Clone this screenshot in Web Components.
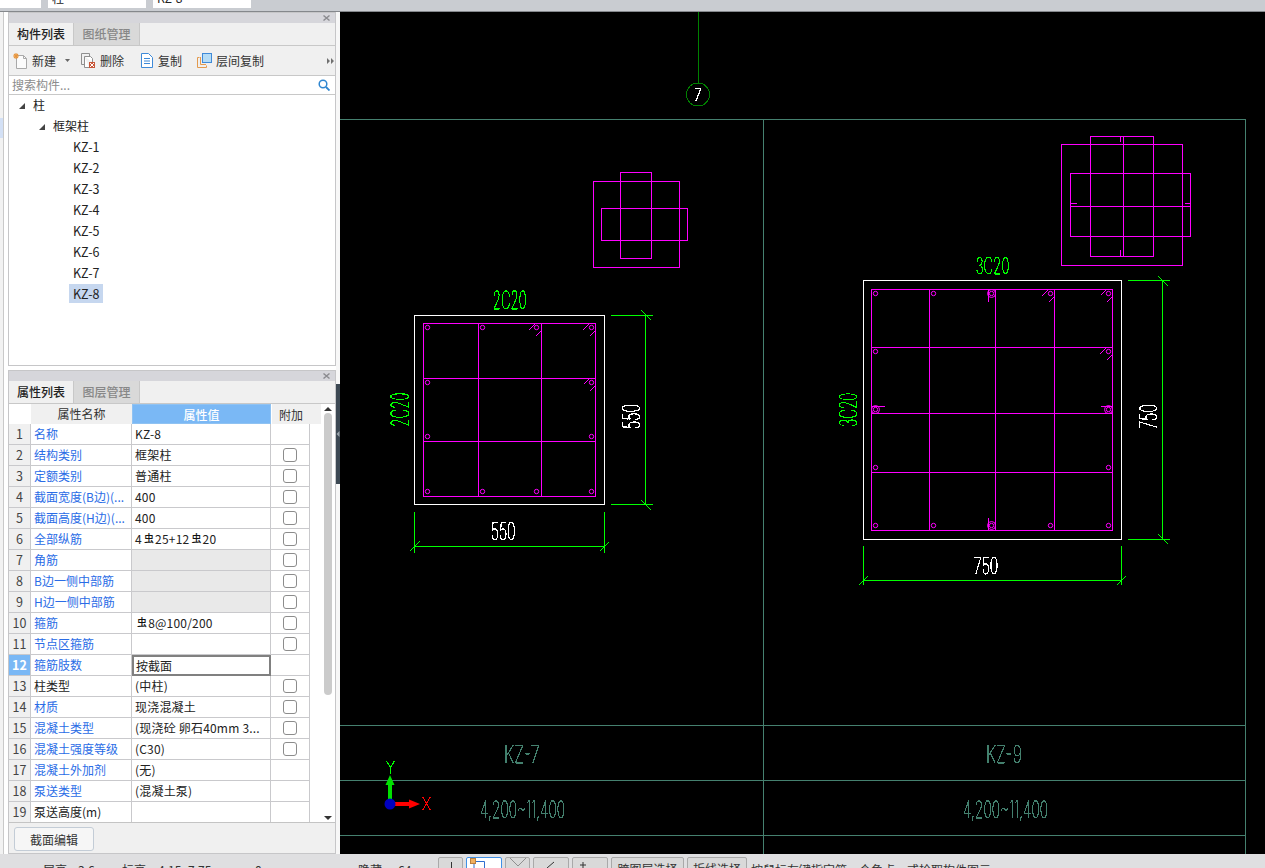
<!DOCTYPE html>
<html lang="zh">
<head>
<meta charset="utf-8">
<title>构件列表</title>
<style>
html, body { margin: 0; height: 100%; }
body {
  width: 1265px;
  height: 868px;
  overflow: hidden;
  display: flex;
  flex-direction: column;
  font: 12px "Noto Sans CJK SC", "Noto Sans", sans-serif;
  color: #222;
}
</style>
</head>
<body>
<gcl-topbar></gcl-topbar>
<gcl-workspace>
  <dock-panel slot="dock" tabs="构件列表,图纸管理" style="flex: 0 0 354px">
    <part-toolbar></part-toolbar>
    <part-search></part-search>
    <part-tree></part-tree>
  </dock-panel>
  <dock-panel slot="dock" tabs="属性列表,图层管理" style="flex: 1 1 auto">
    <prop-grid></prop-grid>
  </dock-panel>
  <cad-canvas slot="canvas"></cad-canvas>
</gcl-workspace>
<gcl-statusbar></gcl-statusbar>

<script>
/**
 * Small helper, every element has its markup set in an open shadow root
 *
 * @param {HTMLElement} el
 * @param {string} html
 */
function shadow (el, html) {
  el.attachShadow({ mode: 'open' }).innerHTML = html
}

class GclTopbar extends HTMLElement {
  connectedCallback () {
    shadow(this, `
<style>
:host { display: flex; flex: 0 0 12px; height: 12px; box-sizing: border-box; overflow: hidden;
  background: #c9ccd1; border-bottom: 1px solid #85888c; gap: 7px; align-items: flex-end; padding-bottom: 3px; }
div { height: 20px; background: #fff; flex: 0 0 98px; box-sizing: border-box; padding: 0 4px; line-height: 20px; }
div:first-of-type { flex-basis: 41px; }
</style>
<div></div><div>柱</div><div>KZ-8</div>`)
  }
}

class GclWorkspace extends HTMLElement {
  connectedCallback () {
    shadow(this, `
<style>
:host { display: grid; grid-template-columns: 8px 328px 4px 925px; flex: 1 1 auto; min-height: 0; background: #fff; }
.rail { border-right: 0; position: relative; background: linear-gradient(90deg, #f2f2f2 3px, #c9c9c9 3px, #c9c9c9 4px, #fff 4px); display: flex; flex-direction: column; }
.rail i { display: block; width: 3px; height: 20px; margin-top: 106px; background: #d3e0f5; }
.dock { display: flex; flex-direction: column; gap: 4px; min-height: 0; }
.split { background: #f7f7f7; padding-top: 372px; }
.split div { height: 100px; background: #3c4853; display: flex; align-items: center; }
.split svg { display: block; }
</style>
<div class="rail"><i></i></div>
<div class="dock"><slot name="dock"></slot></div>
<div class="split"><div><svg width="4" height="8" viewBox="0 0 4 8"><path d="M3.5 1 L0.5 4 L3.5 7 Z" fill="#9aa3ab"/></svg></div></div>
<slot name="canvas"></slot>`)
  }
}

class DockPanel extends HTMLElement {
  connectedCallback () {
    const tabs = this.getAttribute('tabs').split(',')
    shadow(this, `
<style>
:host { display: flex; flex-direction: column; box-sizing: border-box; border: 1px solid #c6c6c8; min-height: 0; background: #f0f0f0; }
.title { flex: 0 0 10px; height: 10px; background: #d6d6db; display: flex; justify-content: flex-end; align-items: center; padding-right: 5px; }
.tabs { flex: 0 0 23px; box-sizing: border-box; height: 23px; display: flex; border-bottom: 1px solid #c8c8c8; background: #f0f0f0; }
.tab { box-sizing: border-box; width: 65px; line-height: 21px; text-align: center; font-weight: 500; color: #222; border-right: 1px solid #c8c8c8; }
.tab + .tab { width: 66px; background: #d9d9d9; color: #878787; }
.body { flex: 1 1 auto; display: flex; flex-direction: column; min-height: 0; }
</style>
<div class="title"><svg width="7" height="6" viewBox="0 0 7 6"><path d="M0.5 0.5 L6.5 5.5 M6.5 0.5 L0.5 5.5" stroke="#8b8b8f" stroke-width="1.4"/></svg></div>
<div class="tabs">${tabs.map(t => `<div class="tab">${t}</div>`).join('')}</div>
<div class="body"><slot></slot></div>`)
  }
}

class PartToolbar extends HTMLElement {
  connectedCallback () {
    shadow(this, `
<style>
:host { display: flex; flex: 0 0 30px; box-sizing: border-box; height: 30px; border-bottom: 1px solid #c8c8c8; align-items: center; padding-left: 4px; background: #f0f0f0; color: #333; }
.btn { display: flex; align-items: center; gap: 4px; }
svg { display: block; flex: none; }
.more { margin-left: auto; margin-right: 1px; }
</style>
<div class="btn" style="width:68px">
  <svg width="15" height="16" viewBox="0 0 15 16"><path d="M3.5 2.5 H10.5 L13.5 5.5 V15.5 H3.5 Z" fill="#fbfbfb" stroke="#a9a9a9"/><path d="M10.5 2.5 V5.5 H13.5" fill="none" stroke="#a9a9a9"/><path d="M0 3 H6 M3 0 V6 M1 1 L5 5 M5 1 L1 5" stroke="#e8953c" stroke-width="1.1"/></svg>
  <span>新建</span>
  <svg style="margin-left:5px" width="5" height="3" viewBox="0 0 5 3"><path d="M0 0 H5 L2.5 3 Z" fill="#666"/></svg>
</div>
<div class="btn" style="width:59px">
  <svg width="15" height="16" viewBox="0 0 15 16"><path d="M0.5 0.5 H8.5 V3 M0.5 0.5 V11.5 H3" fill="none" stroke="#8f8f8f"/><path d="M3.5 3.5 H9.5 L11.5 5.5 V9 M3.5 3.5 V14.5 H8" fill="#fff" stroke="#8f8f8f"/><rect x="8" y="9" width="6" height="6" fill="#c9573a"/><path d="M9 10 L13 14 M13 10 L9 14" stroke="#fff"/></svg>
  <span>删除</span>
</div>
<div class="btn" style="width:57px">
  <svg width="14" height="15" viewBox="0 0 14 15"><path d="M1.5 0.5 H8.5 L12.5 4.5 V14.5 H1.5 Z" fill="#fff" stroke="#3f8ad8"/><path d="M4 5.5 H10 M4 8 H10 M4 10.5 H10" stroke="#3f8ad8"/></svg>
  <span>复制</span>
</div>
<div class="btn">
  <svg width="15" height="15" viewBox="0 0 15 15"><path d="M2.5 4.5 H0.5 V14.5 H9.5 V12.5" fill="none" stroke="#e39a4e"/><path d="M3.5 4 V11.5 H9" fill="none" stroke="#e39a4e"/><rect x="5.5" y="0.5" width="9" height="9" fill="#b5dcf6" stroke="#3f8ad8"/></svg>
  <span>层间复制</span>
</div>
<svg class="more" width="7" height="6" viewBox="0 0 7 6"><path d="M0 0 L3 3 L0 6 Z M4 0 L7 3 L4 6 Z" fill="#707070"/></svg>`)
  }
}

class PartSearch extends HTMLElement {
  connectedCallback () {
    shadow(this, `
<style>
:host { display: flex; flex: 0 0 19px; box-sizing: border-box; height: 19px; border-bottom: 1px solid #c8c8c8; background: #fff; align-items: center; justify-content: space-between; padding: 0 5px 0 3px; color: #8c8c8c; line-height: 18px; }
svg { display: block; }
</style>
<span>搜索构件...</span>
<svg width="12" height="12" viewBox="0 0 12 12"><circle cx="5" cy="5" r="3.8" fill="none" stroke="#2f86d0" stroke-width="1.5"/><path d="M8 8 L11.5 11.5" stroke="#2f86d0" stroke-width="1.8"/></svg>`)
  }
}

class PartTree extends HTMLElement {
  connectedCallback () {
    const arrow = '<svg width="6" height="6" viewBox="0 0 6 6"><path d="M6 0 V6 H0 Z" fill="#444"/></svg>'
    const kids = ['KZ-1', 'KZ-2', 'KZ-3', 'KZ-4', 'KZ-5', 'KZ-6', 'KZ-7', 'KZ-8']
    shadow(this, `
<style>
:host { display: block; flex: 1 1 auto; background: #fff; min-height: 0; overflow: hidden; font-size: 12px; color: #222; }
.row { display: flex; align-items: center; height: 21px; }
.row svg { margin-right: 8px; flex: none; }
.row span { position: relative; top: -1px; }
.l0 { padding-left: 10px; }
.l1 { padding-left: 30px; }
.l2 { padding-left: 60px; }
.l2 span { padding: 0 4px; line-height: 19px; font-size: 12.5px; }
.sel span { background: #c6d7ef; }
</style>
<div class="row l0">${arrow}<span>柱</span></div>
<div class="row l1">${arrow}<span>框架柱</span></div>
${kids.map(k => `<div class="row l2${k === 'KZ-8' ? ' sel' : ''}"><span>${k}</span></div>`).join('')}`)
  }
}

class PropGrid extends HTMLElement {
  connectedCallback () {
    const bar = '<b>虫</b>'
    // name, value, has checkbox, blue name, greyed value
    const rows = [
      ['名称', 'KZ-8', 0, 1],
      ['结构类别', '框架柱', 1, 1],
      ['定额类别', '普通柱', 1, 1],
      ['截面宽度(B边)(...', '400', 1, 1],
      ['截面高度(H边)(...', '400', 1, 1],
      ['全部纵筋', `4${bar}25+12${bar}20`, 1, 1],
      ['角筋', '', 1, 1, 1],
      ['B边一侧中部筋', '', 1, 1, 1],
      ['H边一侧中部筋', '', 1, 1, 1],
      ['箍筋', `${bar}8@100/200`, 1, 1],
      ['节点区箍筋', '', 1, 1],
      ['箍筋肢数', '按截面', 0, 1],
      ['柱类型', '(中柱)', 1, 0],
      ['材质', '现浇混凝土', 1, 1],
      ['混凝土类型', '(现浇砼 卵石40mm 3...', 1, 1],
      ['混凝土强度等级', '(C30)', 1, 1],
      ['混凝土外加剂', '(无)', 0, 1],
      ['泵送类型', '(混凝土泵)', 0, 1],
      ['泵送高度(m)', '', 0, 0]
    ]
    const cells = rows.map((r, i) => {
      const active = i === 11
      return `<div class="c no${active ? ' on' : ''}">${i + 1}</div>` +
        `<div class="c name${r[3] ? ' link' : ''}">${r[0]}</div>` +
        `<div class="c val${r[4] ? ' off' : ''}${active ? ' edit' : ''}">${r[1]}</div>` +
        `<div class="c add">${r[2] ? '<i></i>' : ''}</div><div class="pad"></div>`
    }).join('')
    shadow(this, `
<style>
:host { display: flex; flex-direction: column; flex: 1 1 auto; min-height: 0; white-space: nowrap; }
.wrap { display: flex; flex: 0 0 419px; background: #fff; }
.grid { display: grid; grid-template-columns: 22px 101px 139px 39px 11px; grid-auto-rows: 21px; grid-template-rows: 20px; flex: 0 0 312px; }
.h { background: #f0f0f0; text-align: center; line-height: 19px; color: #333; }
.h.blank { background: #fff; }
.h.cur { background: #7ab8f5; color: #fff; font-weight: 500; border: 1px solid #8fc2f2; box-sizing: border-box; }
.h.add { border-left: 1px solid #fff; }
.c { box-sizing: border-box; border-right: 1px solid #c9c9cc; border-bottom: 1px solid #c9c9cc; line-height: 20px; overflow: hidden; background: #fff; }
.no { background: #f0f0f0; text-align: center; color: #444; font-size: 12.5px; }
.no.on { background: #7ab8f5; color: #fff; font-weight: 700; }
.name { padding-left: 3px; }
.link { color: #2a6ce6; }
.val { padding-left: 3px; color: #222; letter-spacing: 0.2px; }
.off { background: #e9e9e9; }
.edit { border: 2px solid #808080; line-height: 18px; padding-left: 2px; background: #fff; letter-spacing: 0; }
.add { display: flex; align-items: center; justify-content: center; }
.add i { display: block; box-sizing: border-box; width: 14px; height: 14px; border: 1px solid #8c8c8c; border-radius: 3px; background: #fff; }
b { font-weight: 500; font-size: 10px; position: relative; top: -2px; margin: 0 1px 0 2px; color: #111; }
.bar { flex: 1 1 auto; display: flex; flex-direction: column; align-items: center; background: #fff; padding-right: 1px; }
.bar svg { display: block; flex: none; }
.up { margin: 3px 0 2px; }
.thumb { width: 8px; height: 282px; border-radius: 4px; background: #cbcbcb; }
.down { margin: auto 0 3px; }
.foot { flex: 1 1 auto; display: flex; align-items: flex-start; padding: 4px 0 0 5px; background: #f0f0f0; border-top: 1px solid #c4c4c4; margin-top: -1px; }
button { width: 80px; height: 24px; font: inherit; color: #333; background: #f6f6f6; border: 1px solid #c3ccd6; border-radius: 3px; padding: 0; }
</style>
<div class="wrap">
  <div class="grid">
    <div class="h blank"></div><div class="h">属性名称</div><div class="h cur">属性值</div><div class="h add">附加</div><div class="h"></div>
    ${cells}
  </div>
  <div class="bar">
    <svg class="up" width="8" height="4" viewBox="0 0 8 4"><path d="M4 0 L8 4 H0 Z" fill="#333"/></svg>
    <div class="thumb"></div>
    <svg class="down" width="8" height="4" viewBox="0 0 8 4"><path d="M0 0 H8 L4 4 Z" fill="#333"/></svg>
  </div>
</div>
<div class="foot"><button type="button">截面编辑</button></div>`)
  }
}

class CadCanvas extends HTMLElement {
  connectedCallback () {
    const M = '#ff00ff'
    const G = '#00ff00'
    const T = '#45806f'
    const W = '#ffffff'
    const line = (x1, y1, x2, y2, c, w = 1) => `<line x1="${x1}" y1="${y1}" x2="${x2}" y2="${y2}" stroke="${c}" stroke-width="${w}"/>`
    const rect = (x1, y1, x2, y2, c) => `<rect x="${x1}" y="${y1}" width="${x2 - x1}" height="${y2 - y1}" fill="none" stroke="${c}"/>`
    const dot = (x, y, r = 2.2) => `<circle cx="${x + 0.5}" cy="${y + 0.5}" r="${r}" fill="none" stroke="${M}" shape-rendering="auto"/>`
    // thin stretched text like the drawing fonts, box is x0..x1, y0..y1
    const attrs = c => `font-weight="100" lengthAdjust="spacingAndGlyphs" fill="${c}" stroke="${c}" stroke-width="0.25" filter="url(#hard)"`
    const label = (s, x0, y0, x1, y1, c) => {
      const fs = (y1 - y0) / 0.727
      return `<text x="${x0}" y="${y1}" font-size="${fs}" textLength="${x1 - x0}" ${attrs(c)}>${s}</text>`
    }
    const labelUp = (s, x0, y0, x1, y1, c) => {
      const fs = (x1 - x0) / 0.727
      return `<g filter="url(#hard)"><text transform="translate(${x1} ${y1}) rotate(-90)" font-size="${fs}" textLength="${y1 - y0}" font-weight="100" lengthAdjust="spacingAndGlyphs" fill="${c}" stroke="${c}" stroke-width="0.25">${s}</text></g>`
    }

    let s = ''
    // sheet frame
    s += line(340, 119.5, 1245.5, 119.5, T) + line(763.5, 119, 763.5, 854, T) + line(1245.5, 119, 1245.5, 854, T)
    s += line(340, 725.5, 1245.5, 725.5, T) + line(340, 780.5, 1245.5, 780.5, T) + line(340, 835.5, 1245.5, 835.5, T)
    s += line(698.5, 12, 698.5, 83, '#008000') + `<circle cx="698" cy="94.5" r="11.5" fill="none" stroke="#008000"/>`
    s += label('7', 694, 88.5, 702, 100.7, W)

    // small key plans
    s += rect(593.5, 181.5, 679.5, 267.5, M) + rect(620.5, 172.5, 651.5, 258.5, M) + rect(601.5, 208.5, 687.5, 240.5, M)
    s += rect(1061.5, 144.5, 1182.5, 265.5, M) + rect(1090.5, 136.5, 1153.5, 256.5, M) + rect(1070.5, 173.5, 1190.5, 236.5, M)
    s += line(1123.5, 136.5, 1123.5, 256.5, M) + line(1070.5, 206.5, 1190.5, 206.5, M)
    s += line(1120.5, 137, 1120.5, 142, M) + line(1120.5, 250, 1120.5, 256, M) + line(1071, 203.5, 1077, 203.5, M) + line(1185, 203.5, 1190, 203.5, M)

    // KZ-8 section
    s += rect(414.5, 315.5, 604.5, 504.5, W) + rect(423.5, 323.5, 595.5, 496.5, M)
    s += line(478.5, 323.5, 478.5, 496.5, M) + line(541.5, 323.5, 541.5, 496.5, M)
    s += line(423.5, 378.5, 595.5, 378.5, M) + line(423.5, 441.5, 595.5, 441.5, M)
    for (const [x, y] of [[427, 327], [482, 327], [536, 327], [591, 327], [427, 382], [591, 382], [427, 436], [591, 436], [427, 491], [482, 491], [536, 491], [591, 491]]) s += dot(x, y)
    s += line(529, 330, 535, 324, M) + line(536, 336, 541, 331, M) + line(583, 330, 589, 324, M) + line(590, 336, 595, 331, M)
    s += line(584, 384, 589, 379, M) + line(590, 391, 595, 386, M)
    s += label('2C20', 492.7, 291, 526.7, 309.3, G) + labelUp('2C20', 391, 392.7, 409.3, 426.7, G)
    s += label('550', 490.7, 522, 515.7, 540, W) + labelUp('550', 622, 404, 640, 429, W)
    s += line(414.5, 546.5, 604.5, 546.5, G) + line(414.5, 512, 414.5, 553, G) + line(604.5, 512, 604.5, 553, G)
    s += line(410, 551, 420, 541, G) + line(600, 551, 609, 542, G)
    s += line(645.5, 315.5, 645.5, 504.5, G) + line(611, 315.5, 653, 315.5, G) + line(611, 504.5, 653, 504.5, G)
    s += line(641, 310, 651, 320, G) + line(641, 500, 651, 510, G)

    // KZ-9 section
    s += rect(863.5, 280.5, 1121.5, 539.5, W) + rect(871.5, 289.5, 1112.5, 530.5, M)
    for (const x of [929.5, 995.5, 1054.5]) s += line(x, 289.5, x, 530.5, M)
    for (const y of [347.5, 413.5, 472.5]) s += line(871.5, y, 1112.5, y, M)
    for (const x of [875, 933, 991, 1050, 1108]) s += dot(x, 293) + dot(x, 525)
    for (const y of [351, 409, 467]) s += dot(875, y) + dot(1108, y)
    s += dot(991, 293, 4) + dot(991, 525, 4) + dot(875, 409, 4) + dot(1108, 409, 4)
    s += line(1042, 296, 1048, 290, M) + line(1049, 302, 1054, 297, M) + line(1101, 295, 1107, 289, M) + line(1107, 302, 1112, 297, M)
    s += line(1100, 354, 1106, 348, M) + line(1107, 360, 1112, 355, M)
    s += line(988.5, 290, 988.5, 302, M) + line(988.5, 518, 988.5, 530, M) + line(872, 406.5, 885, 406.5, M) + line(1101, 406.5, 1112, 406.5, M)
    s += label('3C20', 975.7, 257.3, 1009.3, 274, G) + labelUp('3C20', 839, 392.7, 856.7, 426.7, G)
    s += label('750', 974, 557.3, 998.3, 574, W) + labelUp('750', 1139.3, 404, 1156.7, 429, W)
    s += line(863.5, 580.5, 1121.5, 580.5, G) + line(863.5, 546, 863.5, 585, G) + line(1121.5, 546, 1121.5, 585, G)
    s += line(859, 585, 868, 576, G) + line(1117, 585, 1126, 576, G)
    s += line(1162.5, 280.5, 1162.5, 539.5, G) + line(1128, 280.5, 1170, 280.5, G) + line(1128, 539.5, 1170, 539.5, G)
    s += line(1158, 276, 1168, 286, G) + line(1158, 534, 1168, 544, G)

    // sheet labels
    s += label('KZ-7', 504, 745, 540, 763, T) + label('KZ-9', 986, 745, 1022, 763, T)
    s += label('4,200~11,400', 480, 800, 565, 817.5, T) + label('4,200~11,400', 963, 800, 1048, 817.5, T)

    // axis marker
    s += `<path d="M388 800 V785 H385.5 L390 775 L394.5 785 H392 V800 Z" fill="#00e000" shape-rendering="auto"/>`
    s += `<path d="M395 802 H409 V799.5 L420 804 L409 808.5 V806 H395 Z" fill="#ff0000" shape-rendering="auto"/>`
    s += `<circle cx="390" cy="804" r="5.5" fill="#0000c0" shape-rendering="auto"/>`
    s += label('Y', 386, 762, 395, 774, G) + label('X', 422, 798, 431, 810, '#ff0000')

    shadow(this, `
<style>
:host { display: block; background: #000; overflow: hidden; }
svg { display: block; font-family: Inter, "Liberation Sans", sans-serif; }
</style>
<svg width="925" height="842" viewBox="340 12 925 842" shape-rendering="crispEdges">
<defs><filter id="hard" x="-10%" y="-10%" width="120%" height="120%" color-interpolation-filters="sRGB"><feComponentTransfer><feFuncA type="discrete" tableValues="0 1 1 1"/></feComponentTransfer></filter></defs>
${s}</svg>`)
  }
}

class GclStatusbar extends HTMLElement {
  connectedCallback () {
    const orth = '<svg width="24" height="11" viewBox="0 0 24 11"><path d="M12.5 4 V11" stroke="#333"/></svg>'
    const snap = '<svg width="34" height="11" viewBox="0 0 34 11"><path d="M7 3.5 H17.5 V11 M7 3.5 V11" fill="none" stroke="#2f6fd0"/><rect x="3.5" y="0.5" width="5" height="5" fill="#f0b060" stroke="#b9803f"/></svg>'
    const cross = '<svg width="24" height="11" viewBox="0 0 24 11"><path d="M4 0 L12 8 L20 0" fill="none" stroke="#8f8f8f"/></svg>'
    const tick = '<svg width="34" height="11" viewBox="0 0 34 11"><path d="M13 10 L20 4" stroke="#333"/></svg>'
    const plus = '<svg width="34" height="11" viewBox="0 0 34 11"><path d="M7 7 H13 M10 4 V10" stroke="#333"/></svg>'
    shadow(this, `
<style>
:host { display: flex; flex: 0 0 14px; height: 14px; overflow: hidden; background: #dfdfe1; color: #333; white-space: nowrap; }
.t { padding-top: 7px; line-height: 17px; flex: none; }
.btn { flex: none; box-sizing: border-box; height: 24px; margin-top: 3px; border: 1px solid #a9a9a9; border-radius: 2px 2px 0 0; background: #d9d9d9; text-align: center; line-height: 22px; padding-top: 0; }
.btn svg { display: block; margin-top: 0; }
.on { background: #fff; border-color: #3f90e6; }
</style>
<span class="t" style="margin-left:43px;width:35px">层高</span>
<span class="t" style="width:44px">3.6</span>
<span class="t" style="width:36px">标高</span>
<span class="t" style="width:97px">4.15~7.75</span>
<span class="t" style="width:103px">0</span>
<span class="t" style="width:40px">隐藏</span>
<span class="t" style="width:40px">64</span>
<div class="btn" style="width:25px">${orth}</div>
<div class="btn on" style="width:36px;margin-left:3px">${snap}</div>
<div class="btn" style="width:25px;margin-left:3px">${cross}</div>
<div class="btn" style="width:36px;margin-left:3px">${tick}</div>
<div class="btn" style="width:36px;margin-left:3px">${plus}</div>
<div class="btn" style="width:73px;margin-left:3px">跨图层选择</div>
<div class="btn" style="width:60px;margin-left:3px">折线选择</div>
<span class="t" style="margin-left:4px">按鼠标左键指定第一个角点，或拾取构件图元</span>`)
  }
}

customElements.define('gcl-topbar', GclTopbar)
customElements.define('gcl-workspace', GclWorkspace)
customElements.define('dock-panel', DockPanel)
customElements.define('part-toolbar', PartToolbar)
customElements.define('part-search', PartSearch)
customElements.define('part-tree', PartTree)
customElements.define('prop-grid', PropGrid)
customElements.define('cad-canvas', CadCanvas)
customElements.define('gcl-statusbar', GclStatusbar)
</script>
</body>
</html>
